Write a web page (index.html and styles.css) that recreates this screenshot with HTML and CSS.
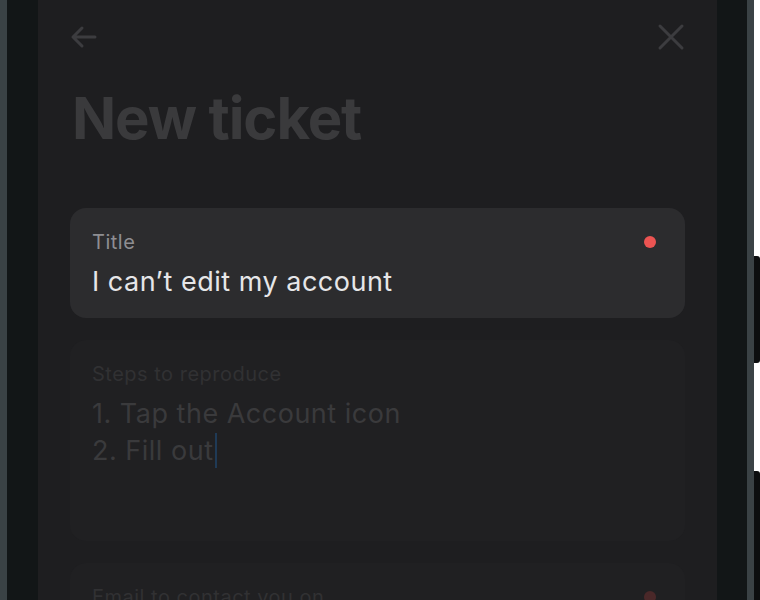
FILE: index.html
```html
<!DOCTYPE html>
<html lang="en">
<head>
<meta charset="utf-8">
<title>New ticket</title>
<link rel="stylesheet" href="styles.css">
</head>
<body>
<div class="page">
  <div class="device">
    <div class="frame">
      <div class="screen">
        <div class="topbar">
          <svg class="icon" viewBox="0 0 28 28" width="28" height="28" aria-label="Back">
            <path d="M26 14H4M13 5l-9 9 9 9" fill="none" stroke="currentColor" stroke-width="3" stroke-linecap="round" stroke-linejoin="round"/>
          </svg>
          <svg class="icon" viewBox="0 0 28 28" width="28" height="28" aria-label="Close">
            <path d="M3 3l22 22M25 3L3 25" fill="none" stroke="currentColor" stroke-width="3" stroke-linecap="round"/>
          </svg>
        </div>
        <h1 class="heading">New ticket</h1>
        <div class="fields">
          <div class="field field-active">
            <div class="field-head">
              <span class="label">Title</span>
              <span class="dot"></span>
            </div>
            <div class="value">I can’t edit my account</div>
          </div>
          <div class="field field-dim field-tall">
            <div class="field-head">
              <span class="label">Steps to reproduce</span>
            </div>
            <div class="value multiline">1. Tap the Account icon<br>2. Fill out<span class="caret"></span></div>
          </div>
          <div class="field field-dim">
            <div class="field-head">
              <span class="label">Email to contact you on</span>
              <span class="dot"></span>
            </div>
          </div>
        </div>
      </div>
    </div>
  </div>
  <div class="side">
    <div class="side-btn btn-one"></div>
    <div class="side-btn btn-two"></div>
  </div>
</div>
</body>
</html>
```
FILE: styles.css
```css
* { box-sizing: border-box; }
html, body { margin: 0; padding: 0; }
body {
  background: #ffffff;
  font-family: "Inter", "Noto Sans", sans-serif;
  overflow: hidden;
}
.page {
  display: flex;
  height: 600px;
  width: 760px;
}
.device {
  width: 754px;
  background: #3a4245;
  padding: 0 7px;
  height: 600px;
}
.frame {
  background: #121617;
  height: 100%;
  padding: 0 30px 0 31px;
}
.screen {
  background: #1e1e20;
  height: 100%;
  padding: 23px 32px 0 31px;
  overflow: hidden;
}
.topbar {
  display: flex;
  justify-content: space-between;
  align-items: center;
  height: 28px;
  color: #3c3c3f;
}
.icon { display: block; }
.heading {
  margin: 31px 0 0 3px;
  font-size: 58px;
  line-height: 72px;
  font-weight: 700;
  letter-spacing: -1.1px;
  color: #3a3a3c;
}
.fields {
  margin-top: 54px;
  margin-left: 1px;
  display: flex;
  flex-direction: column;
  gap: 22px;
}
.field {
  border-radius: 16px;
  padding: 22px 29px 19px 22px;
}
.field-active { background: #2c2c2e; }
.field-dim { background: #202022; }
.field-tall { min-height: 201px; }
.field-head {
  display: flex;
  justify-content: space-between;
  align-items: center;
  height: 24px;
}
.label {
  font-size: 20px;
  line-height: 24px;
  letter-spacing: 0.5px;
  color: #8e8e92;
}
.dot {
  width: 12px;
  height: 12px;
  border-radius: 50%;
  background: #ec5452;
}
.value {
  margin-top: 11px;
  font-size: 27px;
  line-height: 34px;
  letter-spacing: 0.5px;
  color: #e6e6e8;
}
.field-dim .label { color: #313133; }
.field-dim .value { color: #3a3a3c; }
.field-dim .dot { background: #4a2829; }
.multiline {
  line-height: 37px;
  margin-top: 9px;
}
.caret {
  display: inline-block;
  width: 2px;
  height: 35px;
  background: #1f3a56;
  vertical-align: -8px;
  margin-left: 2px;
}
.side {
  width: 6px;
  display: flex;
  flex-direction: column;
}
.side-btn {
  background: #0c0e0f;
  border-radius: 0 3px 3px 0;
}
.btn-one { margin-top: 256px; height: 107px; }
.btn-two { margin-top: 108px; flex: 1; border-radius: 0 3px 0 0; }
```
